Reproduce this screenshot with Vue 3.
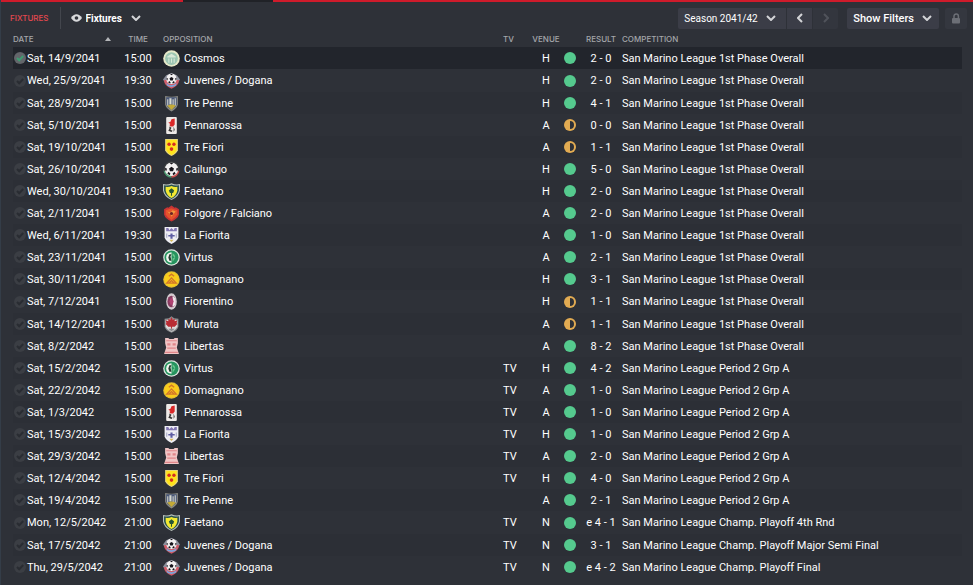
<script setup>
import { ref } from 'vue'

const season = ref('2041/42')
const view = ref('fixtures')

const first = 'San Marino League 1st Phase Overall'
const second = 'San Marino League Period 2 Grp A'
const playoff = 'San Marino League Champ. Playoff '

const list = [
  ['Sat, 14/9/2041', '15:00', 'Cosmos', '', 'H', '2 - 0', first],
  ['Wed, 25/9/2041', '19:30', 'Juvenes / Dogana', '', 'H', '2 - 0', first],
  ['Sat, 28/9/2041', '15:00', 'Tre Penne', '', 'H', '4 - 1', first],
  ['Sat, 5/10/2041', '15:00', 'Pennarossa', '', 'A', '0 - 0', first],
  ['Sat, 19/10/2041', '15:00', 'Tre Fiori', '', 'A', '1 - 1', first],
  ['Sat, 26/10/2041', '15:00', 'Cailungo', '', 'H', '5 - 0', first],
  ['Wed, 30/10/2041', '19:30', 'Faetano', '', 'H', '2 - 0', first],
  ['Sat, 2/11/2041', '15:00', 'Folgore / Falciano', '', 'A', '2 - 0', first],
  ['Wed, 6/11/2041', '19:30', 'La Fiorita', '', 'A', '1 - 0', first],
  ['Sat, 23/11/2041', '15:00', 'Virtus', '', 'A', '2 - 1', first],
  ['Sat, 30/11/2041', '15:00', 'Domagnano', '', 'H', '3 - 1', first],
  ['Sat, 7/12/2041', '15:00', 'Fiorentino', '', 'H', '1 - 1', first],
  ['Sat, 14/12/2041', '15:00', 'Murata', '', 'A', '1 - 1', first],
  ['Sat, 8/2/2042', '15:00', 'Libertas', '', 'A', '8 - 2', first],
  ['Sat, 15/2/2042', '15:00', 'Virtus', 'TV', 'H', '4 - 2', second],
  ['Sat, 22/2/2042', '15:00', 'Domagnano', 'TV', 'A', '1 - 0', second],
  ['Sat, 1/3/2042', '15:00', 'Pennarossa', 'TV', 'A', '1 - 0', second],
  ['Sat, 15/3/2042', '15:00', 'La Fiorita', 'TV', 'H', '1 - 0', second],
  ['Sat, 29/3/2042', '15:00', 'Libertas', 'TV', 'A', '2 - 0', second],
  ['Sat, 12/4/2042', '15:00', 'Tre Fiori', 'TV', 'H', '4 - 0', second],
  ['Sat, 19/4/2042', '15:00', 'Tre Penne', '', 'A', '2 - 1', second],
  ['Mon, 12/5/2042', '21:00', 'Faetano', 'TV', 'N', 'e 4 - 1', playoff + '4th Rnd'],
  ['Sat, 17/5/2042', '21:00', 'Juvenes / Dogana', 'TV', 'N', '3 - 1', playoff + 'Major Semi Final'],
  ['Thu, 29/5/2042', '21:00', 'Juvenes / Dogana', 'TV', 'N', 'e 4 - 2', playoff + 'Final']
]

const fixtures = ref(list.map(([date, time, team, tv, venue, result, competition], i) => {
  const [us, them] = result.replace('e ', '').split(' - ')
  return {
    date, time, team, tv, venue, result, competition,
    picked: i === 0,
    drawn: us === them,
    crest: '#crest-' + team.split(' ').filter(w => w !== '/').join('-').toLowerCase()
  }
}))
</script>

<template>
  <main class="panel">
    <svg class="sprites" aria-hidden="true">
      <symbol id="chevron" viewBox="0 0 10 6"><path d="M1 1l4 4 4-4" fill="none" stroke="currentColor" stroke-width="2" /></symbol>
      <symbol id="shield" viewBox="0 0 16 16"><path d="M2 1q6 1.500 12 0v8q-1 4-6 6.500q-5-2.500-6-6.500z" /></symbol>
      <symbol id="football" viewBox="0 0 12 12">
        <circle cx="6" cy="6" r="6" fill="#f2f0f0" />
        <path d="M6 3.800l2.200 1.500-.8 2.500H4.600l-.8-2.500zM4.300.4h3.400L6 1.800zM.3 4.500l1.600 1-.6 2.200-1-1zM11.700 4.500l-1.600 1 .6 2.200 1-1zM2.300 10l1-1.700 1.700 1.500-.5 1.600zM9.700 10l-1-1.700L7 9.800l.5 1.600z" fill="#18151c" />
      </symbol>
      <symbol id="crest-cosmos" viewBox="0 0 16 16">
        <circle cx="8" cy="8" r="7.800" fill="#e6e9c9" />
        <circle cx="8" cy="8" r="6" fill="#9cc6b2" />
        <path d="M4 6l4-2.500L12 6v1H4zM5 8h1v4H5zM7.500 8h1v4h-1zM10 8h1v4h-1z" fill="#d8e8d7" />
      </symbol>
      <symbol id="crest-juvenes-dogana" viewBox="0 0 16 16">
        <path d="M0 7l3-4 5-2 5 2 3 4-2 3H2z" fill="#8c8f9c" />
        <path d="M1 7.500h14q0 5.500-7 8.200Q1 13 1 7.500z" fill="#d25a66" />
        <path d="M3 10q5 5 10 0l-1 3q-4 2-8 0z" fill="#7aa6dc" />
        <use href="#football" x="3" y="1.500" width="10" height="10" />
      </symbol>
      <symbol id="crest-tre-penne" viewBox="0 0 16 16">
        <use href="#shield" fill="#8b8b84" />
        <path d="M3 2h10v7q-1 3-5 5-4-2-5-5z" fill="#495778" />
        <path d="M4 4h1v6H4zM6 3h1v6H6zM7 3h1v6H7zM9 4h1v6H9zM11 3h1v7h-1z" fill="#d9dbd0" />
        <path d="M4 10q4-2 8 0l-4 4z" fill="#c4ab37" />
      </symbol>
      <symbol id="crest-pennarossa" viewBox="0 0 16 16">
        <rect x="3" width="10" height="16" rx="1" fill="#eeeae7" />
        <path d="M8 2l3-.5v5.500L9.500 9H7L6 7.500l1-1L5 5.500l2-1z" fill="#d92828" />
        <path d="M6 9l2 1-1 2 2 1-1 1-3-1 1-2zM10 9l1 3-1 2z" fill="#363332" />
      </symbol>
      <symbol id="crest-tre-fiori" viewBox="0 0 16 16">
        <path d="M2 0h12v10.500q-1 3-6 5.500-5-2.500-6-5.500z" fill="#e8d77a" />
        <path d="M3 1h10v9q-1 3-5 5-4-2-5-5z" fill="#ffe31c" />
        <g fill="#d52d22"><circle cx="5.700" cy="5" r="1.600" /><circle cx="10.300" cy="5" r="1.600" /><circle cx="8" cy="9.500" r="1.700" /></g>
      </symbol>
      <symbol id="crest-cailungo" viewBox="0 0 16 16">
        <circle cx="8" cy="8" r="7.700" fill="#3a3d3f" />
        <path d="M.5 9a7.600 7.600 0 007.500 6.700V13z" fill="#4a9a71" />
        <path d="M15.500 9a7.600 7.600 0 01-7.500 6.700V13z" fill="#c84e4d" />
        <use href="#football" x="1.700" y="1.500" width="12.600" height="12.600" />
      </symbol>
      <symbol id="crest-faetano" viewBox="0 0 16 16">
        <path d="M0 1q4 1 8-.8 4 1.800 8 .8v6q-1 6-8 9-7-3-8-9z" fill="#b9c1bb" />
        <path d="M1 2q4 1 7-.6 3 1.600 7 .6v5q-1 5-7 8-6-3-7-8z" fill="#28504d" />
        <path d="M2.500 3.500q3 .5 5.500-.7 2.500 1.200 5.500.7V7q-1 5-5.500 7-4.500-2-5.500-7z" fill="#f3e932" />
        <path d="M8 5l2.500 2-1 2.500h-1V12h-1V9.500h-1L5.500 7z" fill="#275638" />
      </symbol>
      <symbol id="crest-folgore-falciano" viewBox="0 0 16 16">
        <path d="M1 4l3-2 1 .5L8 .5l3 2 1-.5 3 2v5q-1 4-7 6.500Q2 13 1 9z" fill="#c93434" />
        <path d="M2.500 5L8 3l5.500 2v4q-1.500 3-5.500 5-4-2-5.500-5z" fill="#e5532c" />
        <path d="M4 6l3 1 2-2 3 1-2 2.500L8 11l-1-2z" fill="#f0973f" />
        <circle cx="8" cy="8" r="1.500" fill="#6e2324" />
      </symbol>
      <symbol id="crest-la-fiorita" viewBox="0 0 16 16">
        <path d="M1.500 0h13v10q-1 3-6.500 6-5.500-3-6.500-6z" fill="#eeeef3" />
        <path d="M3 1h2l1 2 2-2 2 2 1-2h2v3H3z" fill="#8377b3" />
        <path d="M7 6h2v5H7zM5 7.500h6V9H5z" fill="#5f5ea3" />
        <path d="M3 6h1v4H3zM12 6h1v4h-1z" fill="#a9abc6" />
        <path d="M6 12h4l-2 2z" fill="#d5b858" />
      </symbol>
      <symbol id="crest-virtus" viewBox="0 0 16 16">
        <circle cx="8" cy="8" r="7.800" fill="#dce5de" />
        <circle cx="8" cy="8" r="6.600" fill="#26945f" />
        <path d="M8 3v10q-5-.5-5-5t5-5z" fill="#f1f5ef" />
        <path d="M6 5h2l-1 2 1 4H6L5 8z" fill="#263f31" />
        <path d="M9 4q5 3 0 8V9l2-1-2-2z" fill="#6ac78c" />
      </symbol>
      <symbol id="crest-domagnano" viewBox="0 0 16 16">
        <circle cx="8" cy="8" r="7.800" fill="#d9b83a" />
        <circle cx="8" cy="8" r="6.900" fill="#f9cc1c" />
        <path d="M5.500 5L8 3l2.500 2M3.500 11.500L8 6.500l4.500 5zM6 11l2-2 2 2" fill="none" stroke="#d2752a" stroke-width="1.200" />
      </symbol>
      <symbol id="crest-fiorentino" viewBox="0 0 16 16">
        <ellipse cx="8" cy="8" rx="5" ry="7.800" fill="#d3cbd0" />
        <ellipse cx="8" cy="8" rx="3.800" ry="5.500" fill="#883b60" />
        <path d="M9 3v10q3-1 3-5T9 3z" fill="#efe6ea" />
        <path d="M7 5h2l1 3-1 3H7L6 8z" fill="#b04373" />
      </symbol>
      <symbol id="crest-murata" viewBox="0 0 16 16">
        <path d="M1.500 2.500L5.500 2 8 .3 10.500 2l4 .5V10q-1 3.500-6.500 5.800Q2.500 13.500 1.500 10z" fill="#8d8e90" />
        <path d="M2.500 4L8 3l5.500 1v6q-1 2.500-5.500 5-4.500-2.500-5.500-5z" fill="#dddcdc" />
        <path d="M8 1l1.200 2.500L11 2.500v2.500L13.500 4l-.7 2.500.7 1L11 10H8.500v2h-1v-2H5L2.500 7.500l.7-1L2.500 4 5 5V2.500l1.800 1z" fill="#b92c34" />
        <path d="M5 12h6l-3 2.500z" fill="#8a8b8e" />
      </symbol>
      <symbol id="crest-libertas" viewBox="0 0 16 16">
        <path d="M2 0h3l1 1h4l1-1h3v5l-1 4 2 6H1l2-6-1-4z" fill="#f0c5c5" />
        <path d="M3 2h10v1H3zM4 5h3v2H4zM9 5h3v2H9zM4 9h8v1H4zM2 13h12v1H2z" fill="#e0868a" />
      </symbol>
    </svg>

    <div class="progress"><span class="done"></span><span class="gap"></span><span class="rest"></span></div>

    <header class="toolbar">
      <h1>FIXTURES</h1>
      <div class="view">
        <svg class="eye" viewBox="0 0 12 8" aria-hidden="true">
          <path d="M0 4q2.500-4 6-4t6 4q-2.500 4-6 4T0 4z" fill="#d8d9db" />
          <circle cx="6" cy="4" r="2" fill="#2e3138" />
        </svg>
        <select v-model="view" aria-label="View"><option value="fixtures">Fixtures</option></select>
        <svg class="chevron" aria-hidden="true"><use href="#chevron" /></svg>
      </div>
      <div class="seasons">
        <div class="season">
          <select v-model="season" aria-label="Season"><option value="2041/42">Season 2041/42</option></select>
          <svg class="chevron" aria-hidden="true"><use href="#chevron" /></svg>
        </div>
        <button class="step" aria-label="Previous season">
          <svg viewBox="0 0 6 10"><path d="M5 1L1 5l4 4" /></svg>
        </button>
        <button class="step" aria-label="Next season" disabled>
          <svg viewBox="0 0 6 10"><path d="M1 1l4 4-4 4" /></svg>
        </button>
      </div>
      <button class="filters">Show Filters <svg class="chevron" aria-hidden="true"><use href="#chevron" /></svg></button>
      <button class="lock" aria-label="Lock filters">
        <svg viewBox="0 0 10 11"><path d="M3 5V3.200a2.200 2.200 0 014.400 0V5" fill="none" stroke="#6c6f76" stroke-width="1.500" /><rect x="1" y="5" width="8" height="5.500" rx="1" fill="#6c6f76" /></svg>
      </button>
    </header>

    <table>
      <colgroup>
        <col class="c-date"><col class="c-time"><col><col class="c-tv"><col class="c-venue"><col class="c-dot"><col class="c-result"><col class="c-comp">
      </colgroup>
      <thead>
        <tr>
          <th><button class="sort">DATE <svg viewBox="0 0 6 4" aria-hidden="true"><path d="M0 4l3-4 3 4z" fill="#b4b6b9" /></svg></button></th>
          <th class="mid">TIME</th>
          <th>OPPOSITION</th>
          <th>TV</th>
          <th class="mid">VENUE</th>
          <th></th>
          <th class="mid">RESULT</th>
          <th>COMPETITION</th>
        </tr>
      </thead>
      <tbody>
        <tr v-for="f in fixtures" :key="f.date" :class="{ picked: f.picked }">
          <td>
            <label class="date">
              <span class="tick">
                <input v-model="f.picked" type="checkbox">
                <svg viewBox="0 0 12 12" aria-hidden="true"><circle cx="6" cy="6" r="6" /><path d="M3 6l2.200 2.200L9.200 4" /></svg>
              </span>
              {{ f.date }}
            </label>
          </td>
          <td class="mid">{{ f.time }}</td>
          <td><span class="team"><svg class="crest" aria-hidden="true"><use :href="f.crest" /></svg>{{ f.team }}</span></td>
          <td>{{ f.tv }}</td>
          <td class="mid">{{ f.venue }}</td>
          <td>
            <svg class="dot" viewBox="0 0 12 12" role="img" :aria-label="f.drawn ? 'Draw' : 'Win'">
              <template v-if="f.drawn">
                <circle cx="6" cy="6" r="6" fill="#e2ab52" /><path d="M6 2a4 4 0 010 8z" fill="#2d3037" />
              </template>
              <circle v-else cx="6" cy="6" r="6" fill="#55ca8e" />
            </svg>
          </td>
          <td class="mid">{{ f.result }}</td>
          <td>{{ f.competition }}</td>
        </tr>
      </tbody>
    </table>
  </main>
</template>

<style>
body {
  background: #2e3138;
}
</style>

<style scoped>
.panel {
  min-height: 100vh;
  box-sizing: border-box;
  border-left: 1px solid #343d48;
  background: #2e3138;
  color: #fff;
  font: 400 11px/15px Roboto, "Liberation Sans", sans-serif;
}
.sprites {
  display: block;
  width: 0;
  height: 0;
}
.progress {
  display: flex;
  height: 2px;
}
.done {
  flex: 182;
  background: #cf1b2b;
}
.gap {
  flex: 90;
  background: #202227;
}
.rest {
  flex: 700;
  background: #cf1b2b;
}
.toolbar {
  display: flex;
  align-items: center;
  height: 32px;
  padding-right: 6px;
}
h1 {
  margin: 0 11px 0 9px;
  color: #e5484f;
  font: 500 8px/20px Inter, sans-serif;
}
.view {
  display: flex;
  align-items: center;
  gap: 4px;
  height: 22px;
  padding-left: 10px;
  border-left: 1px solid #43464d;
}
select,
button {
  margin: 0;
  padding: 0;
  border: 0;
  background: none;
  color: inherit;
  font: inherit;
  appearance: none;
}
.view select {
  font-size: 10px;
  font-weight: 700;
}
.eye {
  width: 11px;
  height: 8px;
}
.chevron {
  width: 10px;
  height: 6px;
  color: #d3d4d7;
}
.view .chevron {
  margin-left: 4px;
}
.seasons {
  display: flex;
  gap: 1px;
  margin-left: auto;
  height: 21px;
}
.season,
.filters,
.step,
.lock {
  display: flex;
  align-items: center;
  justify-content: center;
  background: #3b3d47;
}
.season {
  gap: 8px;
  padding: 0 10px 0 6px;
  border-radius: 2px 0 0 2px;
}
.season select {
  font-size: 10px;
}
.step {
  width: 25px;
}
.step svg {
  width: 6px;
  height: 10px;
  fill: none;
  stroke: #d3d4d7;
  stroke-width: 2;
}
.step:disabled {
  background: #33363e;
  border-radius: 0 2px 2px 0;
}
.step:disabled svg {
  stroke: #50535b;
}
.filters {
  gap: 8px;
  height: 21px;
  margin-left: 9px;
  padding: 0 7px 0 6px;
  border-radius: 2px;
  font-weight: 500;
}
.lock {
  width: 22px;
  height: 21px;
  margin-left: 6px;
  border-radius: 2px;
  background: #34373f;
}
.lock svg {
  width: 10px;
  height: 11px;
}
table {
  width: calc(100% - 23px);
  margin-left: 12px;
  border-collapse: collapse;
  table-layout: fixed;
}
.c-date { width: 103px; }
.c-time { width: 44px; }
.c-tv { width: 26px; }
.c-venue { width: 34px; }
.c-dot { width: 22px; }
.c-result { width: 32px; }
.c-comp { width: 345px; }
th,
td {
  padding: 0;
  text-align: left;
  white-space: nowrap;
}
th {
  height: 13px;
  color: #a4a6aa;
  font: 500 8px/10px Inter, sans-serif;
  vertical-align: top;
}
th:nth-child(3),
td:nth-child(3) {
  padding-left: 3px;
}
th:last-child,
td:last-child {
  padding-left: 5px;
}
.mid {
  text-align: center;
}
.sort {
  display: flex;
  align-items: center;
  justify-content: space-between;
  width: 98px;
}
.sort svg {
  width: 6px;
  height: 4px;
}
td {
  height: 22px;
}
tbody tr:nth-child(10n + 2) td {
  height: 23px;
}
tbody tr:nth-child(odd) {
  background: #2c2f36;
}
tbody tr.picked {
  background: #22252c;
}
.date,
.team {
  display: flex;
  align-items: center;
}
.date {
  gap: 1px;
  padding-left: 1px;
}
.team {
  gap: 4px;
}
.crest {
  width: 17px;
  height: 17px;
}
.tick {
  display: grid;
  width: 12px;
  height: 12px;
}
.tick input,
.tick svg {
  grid-area: 1 / 1;
  width: 12px;
  height: 12px;
  margin: 0;
}
.tick input {
  appearance: none;
}
.tick svg {
  pointer-events: none;
  fill: #3b3e44;
  stroke: #292c32;
}
.tick circle {
  stroke: none;
}
.tick path {
  fill: none;
  stroke-width: 2;
}
.tick input:checked + svg {
  fill: #63666b;
  stroke: #3f9c72;
}
.dot {
  display: block;
  width: 12px;
  height: 12px;
  margin-left: 1px;
}
</style>
